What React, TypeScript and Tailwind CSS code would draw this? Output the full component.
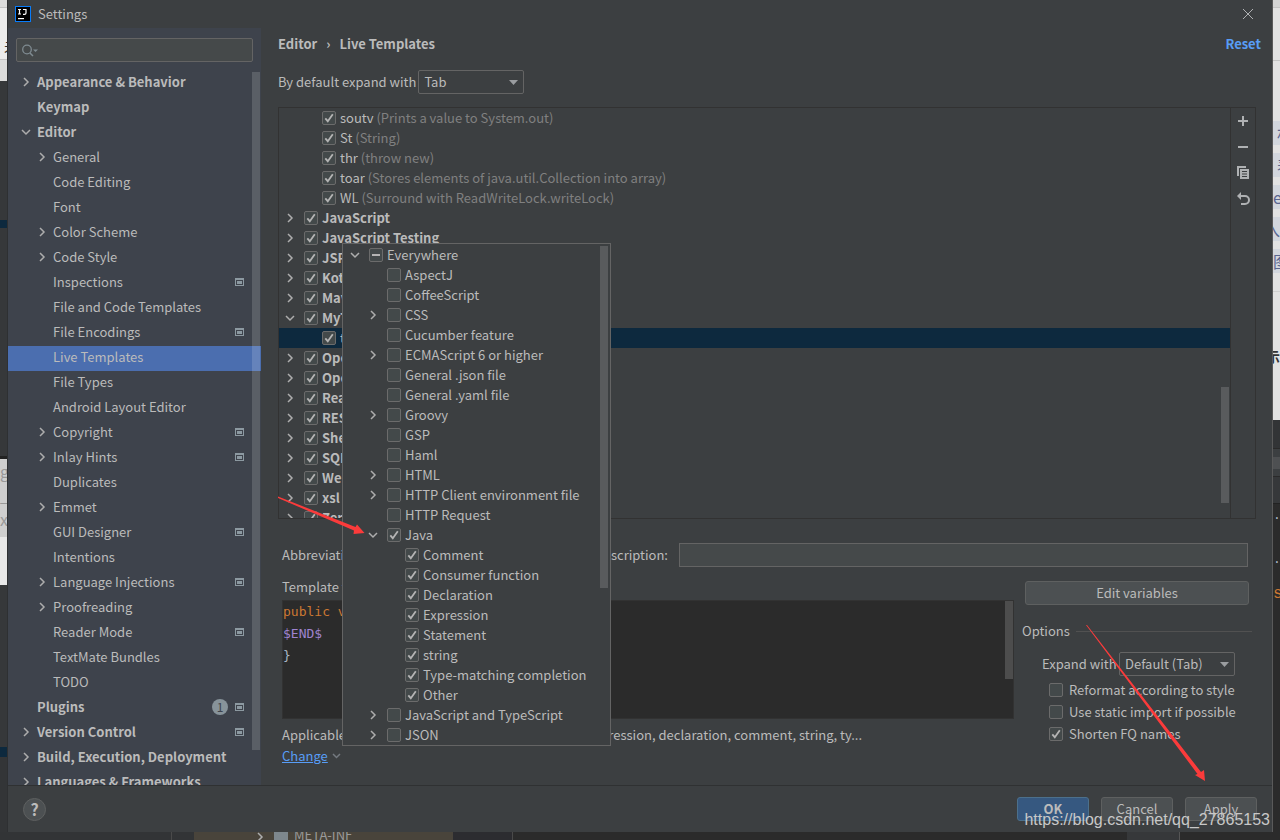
import { useEffect, useRef, type ReactNode } from "react";
import clsx from "clsx";

type SettingsItem = {
  label: string;
  level: 0 | 1;
  arrow?: "right" | "down";
  project?: boolean;
  badge?: number;
};

type CheckItem = {
  label: string;
  hint?: string;
  level: 0 | 1 | 2;
  arrow?: "right" | "down";
  checked?: boolean;
  mixed?: boolean;
  selected?: boolean;
};

const settingsItems: SettingsItem[] = [
  { label: "Appearance & Behavior", level: 0, arrow: "right" },
  { label: "Keymap", level: 0 },
  { label: "Editor", level: 0, arrow: "down" },
  { label: "General", level: 1, arrow: "right" },
  { label: "Code Editing", level: 1 },
  { label: "Font", level: 1 },
  { label: "Color Scheme", level: 1, arrow: "right" },
  { label: "Code Style", level: 1, arrow: "right" },
  { label: "Inspections", level: 1, project: true },
  { label: "File and Code Templates", level: 1 },
  { label: "File Encodings", level: 1, project: true },
  { label: "Live Templates", level: 1 },
  { label: "File Types", level: 1 },
  { label: "Android Layout Editor", level: 1 },
  { label: "Copyright", level: 1, arrow: "right", project: true },
  { label: "Inlay Hints", level: 1, arrow: "right", project: true },
  { label: "Duplicates", level: 1 },
  { label: "Emmet", level: 1, arrow: "right" },
  { label: "GUI Designer", level: 1, project: true },
  { label: "Intentions", level: 1 },
  { label: "Language Injections", level: 1, arrow: "right", project: true },
  { label: "Proofreading", level: 1, arrow: "right" },
  { label: "Reader Mode", level: 1, project: true },
  { label: "TextMate Bundles", level: 1 },
  { label: "TODO", level: 1 },
  { label: "Plugins", level: 0, project: true, badge: 1 },
  { label: "Version Control", level: 0, arrow: "right", project: true },
  { label: "Build, Execution, Deployment", level: 0, arrow: "right" },
  { label: "Languages & Frameworks", level: 0, arrow: "right" },
];

const templateItems: CheckItem[] = [
  { label: "soutv", hint: "(Prints a value to System.out)", level: 1, checked: true },
  { label: "St", hint: "(String)", level: 1, checked: true },
  { label: "thr", hint: "(throw new)", level: 1, checked: true },
  { label: "toar", hint: "(Stores elements of java.util.Collection into array)", level: 1, checked: true },
  { label: "WL", hint: "(Surround with ReadWriteLock.writeLock)", level: 1, checked: true },
  { label: "JavaScript", level: 0, arrow: "right", checked: true },
  { label: "JavaScript Testing", level: 0, arrow: "right", checked: true },
  { label: "JSP", level: 0, arrow: "right", checked: true },
  { label: "Kotlin", level: 0, arrow: "right", checked: true },
  { label: "Maven", level: 0, arrow: "right", checked: true },
  { label: "MyTemplates", level: 0, arrow: "down", checked: true },
  { label: "test", level: 1, checked: true, selected: true },
  { label: "OpenAPI (.json)", level: 0, arrow: "right", checked: true },
  { label: "OpenAPI (.yaml)", level: 0, arrow: "right", checked: true },
  { label: "React", level: 0, arrow: "right", checked: true },
  { label: "RESTful Web Services", level: 0, arrow: "right", checked: true },
  { label: "Shell Script", level: 0, arrow: "right", checked: true },
  { label: "SQL", level: 0, arrow: "right", checked: true },
  { label: "Web Services", level: 0, arrow: "right", checked: true },
  { label: "xsl", level: 0, arrow: "right", checked: true },
  { label: "Zen HTML", level: 0, arrow: "right", checked: true },
];

const contextItems: CheckItem[] = [
  { label: "Everywhere", level: 0, arrow: "down", mixed: true },
  { label: "AspectJ", level: 1 },
  { label: "CoffeeScript", level: 1 },
  { label: "CSS", level: 1, arrow: "right" },
  { label: "Cucumber feature", level: 1 },
  { label: "ECMAScript 6 or higher", level: 1, arrow: "right" },
  { label: "General .json file", level: 1 },
  { label: "General .yaml file", level: 1 },
  { label: "Groovy", level: 1, arrow: "right" },
  { label: "GSP", level: 1 },
  { label: "Haml", level: 1 },
  { label: "HTML", level: 1, arrow: "right" },
  { label: "HTTP Client environment file", level: 1, arrow: "right" },
  { label: "HTTP Request", level: 1 },
  { label: "Java", level: 1, arrow: "down", checked: true },
  { label: "Comment", level: 2, checked: true },
  { label: "Consumer function", level: 2, checked: true },
  { label: "Declaration", level: 2, checked: true },
  { label: "Expression", level: 2, checked: true },
  { label: "Statement", level: 2, checked: true },
  { label: "string", level: 2, checked: true },
  { label: "Type-matching completion", level: 2, checked: true },
  { label: "Other", level: 2, checked: true },
  { label: "JavaScript and TypeScript", level: 1, arrow: "right" },
  { label: "JSON", level: 1, arrow: "right" },
];

function Chevron({ dir }: { dir?: "right" | "down" }) {
  return (
    <span className="flex w-4 shrink-0 justify-center">
      {dir && (
        <svg width="10" height="10" viewBox="0 0 10 10" fill="none" stroke="#adadad" strokeWidth="1.5">
          <path d={dir === "right" ? "M3 1l4 4-4 4" : "M1 3l4 4 4-4"} />
        </svg>
      )}
    </span>
  );
}

function CheckBox({ id, checked, mixed }: { id: string; checked?: boolean; mixed?: boolean }) {
  const ref = useRef<HTMLInputElement>(null);

  useEffect(() => {
    if (ref.current) ref.current.indeterminate = !!mixed;
  }, [mixed]);

  return (
    <span className="grid size-3.5 shrink-0 place-items-center *:col-start-1 *:row-start-1">
      <input
        ref={ref}
        id={id}
        type="checkbox"
        defaultChecked={checked}
        className="peer size-3.5 appearance-none rounded-xs border border-[#6b6b6b] bg-[#43494a]"
      />
      <svg
        className="pointer-events-none invisible peer-checked:visible"
        width="10"
        height="10"
        viewBox="0 0 10 10"
        fill="none"
        stroke="#b4b4b4"
        strokeWidth="1.8"
      >
        <path d="M1.3 5.3l2.5 2.9L8.8 1.2" />
      </svg>
      {mixed && <span className="pointer-events-none h-0.5 w-2 bg-[#b4b4b4]" />}
    </span>
  );
}

function CheckTree({ items, prefix, boldRoots }: { items: CheckItem[]; prefix: string; boldRoots?: boolean }) {
  return (
    <ul>
      {items.map((item, i) => (
        <li
          key={item.label}
          className={clsx(
            "flex h-5 items-center whitespace-nowrap",
            item.level === 0 && "pl-[3px]",
            item.level === 1 && "pl-[21px]",
            item.level === 2 && "pl-[39px]",
            item.selected && "bg-[#0d293e]",
          )}
        >
          <Chevron dir={item.arrow} />
          <span className="ml-1.5 flex items-center gap-1">
            <CheckBox id={`${prefix}-${i}`} checked={item.checked} mixed={item.mixed} />
            <label htmlFor={`${prefix}-${i}`} className={clsx(boldRoots && item.level === 0 && "font-bold")}>
              {item.label}
              {item.hint && <span className="text-[#808080]"> {item.hint}</span>}
            </label>
          </span>
        </li>
      ))}
    </ul>
  );
}

function ProjectIcon() {
  return (
    <svg width="9" height="8" viewBox="0 0 9 8" fill="#8c99a1" className="shrink-0">
      <path fillRule="evenodd" d="M0 0h9v8H0zM1 2v5h7V2z" />
      <path d="M2 3h5v3H2z" />
    </svg>
  );
}

function Combo({ id, value, className }: { id: string; value: string; className: string }) {
  return (
    <span className={clsx("grid shrink-0 items-center *:col-start-1 *:row-start-1", className)}>
      <select id={id} className="h-6 w-full appearance-none rounded-xs border border-[#646464] bg-[#3c3f41] pl-[5px]">
        <option>{value}</option>
      </select>
      <svg className="pointer-events-none mr-1.5 justify-self-end" width="9" height="5" viewBox="0 0 9 5" fill="#9a9da0">
        <path d="M0 0h9L4.5 5z" />
      </svg>
    </span>
  );
}

function ToolButton({ label, children }: { label: string; children: ReactNode }) {
  return (
    <button aria-label={label} className="flex h-[26px] w-full items-center justify-center">
      <svg width="14" height="14" viewBox="0 0 14 14" fill="#afb1b3">
        {children}
      </svg>
    </button>
  );
}

function Sidebar() {
  return (
    <aside className="flex w-[253px] shrink-0 flex-col bg-[#3e434c]">
      <div className="mx-2 mt-2.5 grid items-center *:col-start-1 *:row-start-1">
        <input
          aria-label="Search settings"
          className="h-6 w-full rounded-xs border border-[#646464] bg-[#45494a] pl-7 outline-none"
        />
        <svg className="pointer-events-none ml-1.5" width="17" height="13" viewBox="0 0 17 13" fill="none" stroke="#7f8b91">
          <circle cx="5" cy="5.5" r="4.3" strokeWidth="1.3" />
          <path d="M8 9l3 3" strokeWidth="1.5" />
          <path d="M11 5.5h5l-2.5 2.5z" fill="#7f8b91" stroke="none" />
        </svg>
      </div>
      <nav aria-label="Settings" className="relative mt-[9px] min-h-0 flex-1 overflow-hidden">
        {settingsItems.map((item) => (
          <button
            key={item.label}
            className={clsx(
              "flex h-[25px] w-full items-center pr-[17px] pb-[3px] text-left whitespace-nowrap",
              item.level === 0 ? "pl-2.5 font-bold" : "pl-[26px]",
              item.label === "Live Templates" && "bg-[#4b6eaf]",
            )}
          >
            <Chevron dir={item.arrow} />
            <span className="ml-[3px] flex-1">{item.label}</span>
            {item.badge && (
              <span className="mr-[7px] flex size-4 items-center justify-center rounded-full bg-[#87939a] text-xs font-normal text-[#3e434c]">
                {item.badge}
              </span>
            )}
            {item.project && <ProjectIcon />}
          </button>
        ))}
        <div className="absolute top-px right-px h-[678px] w-2 bg-white/15" />
      </nav>
    </aside>
  );
}

function TemplateList() {
  return (
    <div className="mt-[13px] mr-4 ml-[17px] flex min-h-0 flex-1 border border-[#323232]">
      <div className="relative flex-1 overflow-hidden">
        <CheckTree items={templateItems} prefix="template" boldRoots />
        <div className="absolute right-px bottom-[15px] h-[116px] w-2 bg-[#595b5d]" />
      </div>
      <div className="w-[25px] border-l border-[#323232]">
        <ToolButton label="Add">
          <path d="M6 2h2v4h4v2H8v4H6V8H2V6h4z" />
        </ToolButton>
        <ToolButton label="Remove">
          <path d="M2 6h10v2H2z" />
        </ToolButton>
        <ToolButton label="Duplicate">
          <path d="M1 0h9v2H3v8H1z" />
          <path fillRule="evenodd" d="M4 3h9v10H4zM6 5v1h5V5zM6 7.500v1h5v-1zM6 10v1h5v-1z" />
        </ToolButton>
        <ToolButton label="Revert">
          <path d="M1 4l4-4v8z" />
          <path d="M4 4h5a4 4 0 010 8H5" fill="none" stroke="#afb1b3" strokeWidth="2" />
        </ToolButton>
      </div>
    </div>
  );
}

function TemplateForm() {
  return (
    <div className="ml-[21px]">
      <div className="mt-6 mr-6 flex h-6 items-center">
        <div className="flex w-[397px] shrink-0 items-center gap-2 pr-[11px]">
          <label htmlFor="abbreviation">Abbreviation:</label>
          <input
            id="abbreviation"
            defaultValue="test"
            className="h-6 min-w-0 flex-1 border border-[#646464] bg-[#45494a] px-1.5"
          />
          <label htmlFor="description">Description:</label>
        </div>
        <input
          id="description"
          className="h-6 min-w-0 flex-1 border border-[#646464] bg-[#45494a] px-1.5 outline-none"
        />
      </div>

      <div className="mt-2.5 mr-5 flex gap-2">
        <div className="min-w-0 flex-1">
          <h3 className="h-5 leading-5">Template text:</h3>
          <div className="relative mt-[3px] h-[119px] border border-[#323232] bg-[#2b2b2b] font-['DejaVu_Sans_Mono','Liberation_Mono',monospace] text-[13px] leading-[22px]">
            <pre className="font-[inherit] text-[#a9b7c6]">
              <span className="text-[#cc7832]">public void</span> test(){"{\n"}
              <span className="text-[#9f83cf]">$END$</span>
              {"\n}"}
            </pre>
            <div className="absolute top-0 right-0 h-[78px] w-2 bg-[#4d4d4d]" />
          </div>
          <p className="mt-1.5 h-5 leading-5 whitespace-nowrap">
            Applicable in Java: statement, consumer function, expression, declaration, comment, string, ty...
          </p>
          <a href="#contexts" className="mt-px mb-[19px] flex h-5 items-center gap-1 text-[#589df6]">
            <span className="underline">Change</span>
            <svg width="9" height="6" viewBox="0 0 9 6" fill="none" stroke="#747a80" strokeWidth="1.5">
              <path d="M1 1l3.500 3.500L8 1" />
            </svg>
          </a>
        </div>

        <div className="w-[230px] shrink-0 pt-1">
          <div className="px-[3px]">
            <button className="h-6 w-full rounded-[3px] border border-[#5e6060] bg-[#4c5052]">Edit variables</button>
          </div>
          <div className="mt-4 flex h-5 items-center gap-1.5">
            Options
            <span className="h-px flex-1 bg-[#515151]" />
          </div>
          <div className="mt-[11px] flex items-center pl-5">
            <label htmlFor="expand-with" className="whitespace-nowrap">
              Expand with
            </label>
            <Combo id="expand-with" value="Default (Tab)" className="mr-[17px] ml-auto w-[116px]" />
          </div>
          <div className="mt-[3px] pl-[27px]">
            {["Reformat according to style", "Use static import if possible", "Shorten FQ names"].map((label, i) => (
              <div key={label} className="flex h-[22px] items-center gap-1.5 whitespace-nowrap">
                <CheckBox id={`option-${i}`} checked={i === 2} />
                <label htmlFor={`option-${i}`}>{label}</label>
              </div>
            ))}
          </div>
        </div>
      </div>
    </div>
  );
}

function ContextPopup() {
  return (
    <div className="absolute top-[243px] left-[342px] w-[269px] border border-[#646464] bg-[#3c3f41] pt-px pl-px">
      <CheckTree items={contextItems} prefix="context" />
      <div className="absolute top-0.5 right-0.5 h-[342px] w-2 bg-[#595b5d]" />
    </div>
  );
}

function Dialog() {
  return (
    <div className="flex min-w-0 flex-1 flex-col bg-[#3c3f41]">
      <header className="flex h-7 shrink-0 items-center pr-[19px] pl-[7px]">
        <svg width="16" height="16" viewBox="0 0 16 16" aria-hidden="true">
          <rect x=".5" y=".5" width="15" height="15" fill="#000" stroke="#087cfa" />
          <path
            d="M3 3.500h3M4.500 3.500v4.500M3 8h3M8 3.500h3v3.500q0 1.300-1.500 1.300H8"
            fill="none"
            stroke="#fff"
            strokeWidth="1.2"
          />
          <path d="M3 12h6v1.200H3z" fill="#fff" />
        </svg>
        <h1 className="ml-[7px] flex-1">Settings</h1>
        <button aria-label="Close">
          <svg width="10" height="10" viewBox="0 0 10 10" stroke="#afb1b3">
            <path d="M0 0l10 10M10 0L0 10" />
          </svg>
        </button>
      </header>

      <div className="flex min-h-0 flex-1">
        <Sidebar />
        <main className="flex min-w-0 flex-1 flex-col">
          <div className="flex h-8 shrink-0 items-center pr-[11px] pl-[17px] font-bold">
            <a href="#editor">Editor</a>
            <span className="mx-[9px]">›</span>
            <h2>Live Templates</h2>
            <button className="ml-auto text-[#589df6]">Reset</button>
          </div>
          <div className="mt-2.5 flex items-center gap-0.5 pl-[17px]">
            <label htmlFor="default-expand">By default expand with</label>
            <Combo id="default-expand" value="Tab" className="w-[106px]" />
          </div>
          <TemplateList />
          <TemplateForm />
        </main>
      </div>

      <footer className="flex h-[47px] shrink-0 items-center gap-3 border-t border-[#2f3132] px-[15px]">
        <button
          aria-label="Help"
          className="mr-auto size-[23px] rounded-full border border-[#5e6060] bg-[#4c5052] text-base leading-5 font-bold"
        >
          ?
        </button>
        <button className="h-6 w-[72px] rounded-[3px] border border-[#4c708c] bg-[#365880] font-bold">OK</button>
        <button className="h-6 w-[72px] rounded-[3px] border border-[#5e6060] bg-[#4c5052]">Cancel</button>
        <button className="h-6 w-[72px] rounded-[3px] border border-[#5e6060] bg-[#4c5052]">Apply</button>
      </footer>
    </div>
  );
}

// Slivers of the windows that stay visible behind the dialog
function LeftEdge() {
  return (
    <div className="flex w-2 shrink-0 flex-col overflow-hidden border-r border-[#2e3032] bg-[#333537]">
      <div className="h-[7px] bg-[#dcdcdc]" />
      <div className="flex h-[53px] border-y border-[#c4c4c4] bg-[#ececec] pt-7 pl-1 text-[15px] text-[#333]">未</div>
      <div className="h-[21px] bg-[#dcdcdc]" />
      <div className="h-[139px] bg-[#36383a]" />
      <div className="h-2 bg-[#0d293e]" />
      <div className="h-[228px] bg-[#36383a]" />
      <div className="h-[3px] bg-[#222]" />
      <div className="h-[78px] bg-[#cfcfcf] text-base leading-6 text-[#999]">
        <p>g</p>
        <p>_</p>
        <p>x</p>
      </div>
      <div className="h-12 bg-[#e8e8e8]" />
      <div className="h-[162px] bg-[#36383a]" />
      <div className="h-2.5 bg-[#0d293e]" />
    </div>
  );
}

function RightEdge() {
  return (
    <div className="flex w-2 shrink-0 flex-col overflow-hidden border-l border-[#5a5a5a] bg-[#2b2b2b]">
      <div className="h-[7px] bg-[#d4d4d4]" />
      <div className="h-[54px] border-y border-[#c4c4c4] bg-[#e2e2e2]" />
      <div className="flex h-[231px] flex-col gap-2 border-b border-[#d0d0d0] bg-[#e2e2e2] pt-[60px] text-base leading-6 text-[#5b6690]">
        <span className="h-6 bg-[#d2d6dd] pl-1">林</span>
        <span className="h-6 bg-[#d2d6dd] pl-1">表</span>
        <span className="h-6 bg-[#d2d6dd]">e</span>
        <span className="flex h-6 justify-end bg-[#d2d6dd]">入</span>
        <span className="h-6 bg-[#d2d6dd]">图</span>
      </div>
      <div className="flex h-32 justify-end bg-[#e2e2e2] pt-[52px] text-sm leading-6 font-bold text-[#333]">示</div>
      <div className="h-7 bg-[#323436]" />
      <div className="h-[29px] border-y border-[#2a2a2a] bg-[#3c3f41] py-2">
        <div className="h-3 bg-[#4e5052]" />
      </div>
      <div className="h-[27px] border-b border-[#222] bg-[#36383a]" />
      <div className="-mt-2.5 font-['Liberation_Mono',monospace] leading-[44px] text-[#a9b7c6]">
        <p>.</p>
        <p>.</p>
        <p className="text-base text-[#cc7832]">s</p>
      </div>
    </div>
  );
}

function BottomEdge() {
  return (
    <div className="flex h-2 shrink-0 overflow-hidden bg-[#2b2b2b] leading-[10px]">
      <div className="w-[172px] border-r border-[#4a4a4a] bg-[#323436]" />
      <div className="w-[22px] bg-[#323436]" />
      <div className="flex w-[259px] items-start gap-1.5 bg-[#49443b] pl-[58px] text-[#9a9a9a]">
        <Chevron dir="right" />
        <span className="h-2 w-3.5 bg-[#7d878d]" />
        <span className="-mt-0.5">META-INF</span>
      </div>
      <div className="w-[60px] border-r border-[#4a4a4a] bg-[#2c2c30]" />
      <div className="flex-1" />
      <div className="w-[53px] border-r border-[#555] bg-[#36383a]" />
      <div className="w-[100px]" />
    </div>
  );
}

export default function App() {
  return (
    <div className="relative flex h-screen flex-col overflow-hidden bg-[#2b2b2b] font-['Noto_Sans_CJK_SC','Noto_Sans',sans-serif] text-[13px] leading-5 text-[#bbbbbb]">
      <div className="flex min-h-0 flex-1">
        <LeftEdge />
        <Dialog />
        <RightEdge />
      </div>
      <BottomEdge />

      <ContextPopup />

      <svg
        className="pointer-events-none absolute top-[496px] left-[278px]"
        width="88"
        height="42"
        viewBox="0 0 88 42"
        fill="#fb3b3b"
        aria-hidden="true"
      >
        <path d="M0 .5L0 2 76 34.500 75.500 38 86.500 37 79 28.500 77.500 31z" />
      </svg>
      <svg
        className="pointer-events-none absolute right-[74px] bottom-[58px]"
        width="120"
        height="158"
        viewBox="0 0 120 158"
        fill="#fb3b3b"
        aria-hidden="true"
      >
        <path d="M0 1L1 1 115 148 118 146 119 157 109 151 111.500 150z" />
      </svg>
      <p className="pointer-events-none absolute right-2.5 bottom-2.5 font-['Liberation_Sans',sans-serif] text-base leading-5 text-[#c8c8c8]">
        https://blog.csdn.net/qq_27865153
      </p>
    </div>
  );
}
